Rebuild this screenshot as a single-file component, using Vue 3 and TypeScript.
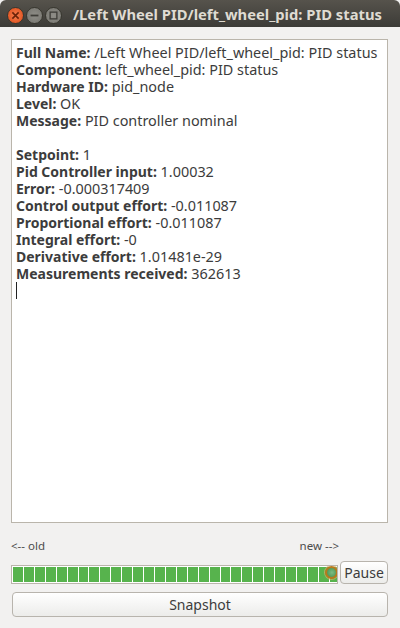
<script setup lang="ts">
interface Row { label: string; value: string }
const top: Row[] = [
  { label: 'Full Name:', value: '/Left Wheel PID/left_wheel_pid: PID status' },
  { label: 'Component:', value: 'left_wheel_pid: PID status' },
  { label: 'Hardware ID:', value: 'pid_node' },
  { label: 'Level:', value: 'OK' },
  { label: 'Message:', value: 'PID controller nominal' },
]
const bottom: Row[] = [
  { label: 'Setpoint:', value: '1' },
  { label: 'Pid Controller input:', value: '1.00032' },
  { label: 'Error:', value: '-0.000317409' },
  { label: 'Control output effort:', value: '-0.011087' },
  { label: 'Proportional effort:', value: '-0.011087' },
  { label: 'Integral effort:', value: '-0' },
  { label: 'Derivative effort:', value: '1.01481e-29' },
  { label: 'Measurements received:', value: '362613' },
]
const cells = Array.from({ length: 30 }, (_, i) => i)
</script>

<template>
  <div class="window">
    <header class="titlebar">
      <div class="controls">
        <span class="ctl close">
          <svg width="9" height="9" viewBox="0 0 8 8"><path d="M1.2 1.2L6.8 6.8M6.8 1.2L1.2 6.8" stroke="#6a2208" stroke-width="1.4" /></svg>
        </span>
        <span class="ctl">
          <svg width="9" height="9" viewBox="0 0 8 8"><path d="M0.5 4H7.5" stroke="#3f3e39" stroke-width="1.6" /></svg>
        </span>
        <span class="ctl">
          <svg width="9" height="9" viewBox="0 0 8 8"><rect x="1" y="1" width="6" height="6" fill="none" stroke="#3f3e39" stroke-width="1.2" /></svg>
        </span>
      </div>
      <div class="title">/Left Wheel PID/left_wheel_pid: PID status</div>
    </header>
    <main class="body">
      <section class="textbox">
        <div v-for="r in top" :key="r.label" class="line"><b>{{ r.label }}</b> {{ r.value }}</div>
        <div class="line blank"></div>
        <div v-for="r in bottom" :key="r.label" class="line"><b>{{ r.label }}</b> {{ r.value }}</div>
        <div class="caret"></div>
      </section>
      <div class="legend"><span>&lt;-- old</span><span>new --&gt;</span></div>
      <div class="timeline-row">
        <div class="timeline">
          <span v-for="c in cells" :key="c" class="cell"></span>
          <span class="marker"></span>
        </div>
        <button class="btn pause">Pause</button>
      </div>
      <button class="btn snapshot">Snapshot</button>
    </main>
  </div>
</template>

<style>
html, body { margin: 0; background: #f2f1f0; }
</style>

<style scoped>
.window {
  width: 400px;
  height: 628px;
  overflow: hidden;
  background: #f2f1f0;
  font-family: "Noto Sans", "Open Sans", sans-serif;
  font-size: 14px;
  color: #3c3c3c;
  display: flex;
  flex-direction: column;
}
.titlebar {
  height: 27px;
  flex: none;
  border-radius: 6px 6px 0 0;
  background: linear-gradient(#56534c, #3c3b37);
  display: flex;
  align-items: center;
  padding-left: 7px;
  box-sizing: border-box;
}
.controls { display: flex; gap: 2px; width: 66px; flex: none; margin-top: 4px; }
.ctl {
  width: 17px;
  height: 17px;
  flex: none;
  box-sizing: border-box;
  border-radius: 50%;
  background: radial-gradient(circle, #8f8e88, #75746e);
  border: 1px solid #38372f;
  display: flex;
  align-items: center;
  justify-content: center;
}
.close { background: radial-gradient(circle, #f58050, #dd4814); }
.title {
  color: #dfdbd2;
  font-weight: 700;
  font-size: 14.75px;
  white-space: nowrap;
}
.body {
  flex: 1;
  padding: 12px 12px 0 11px;
  display: flex;
  flex-direction: column;
}
.textbox {
  height: 484px;
  flex: none;
  box-sizing: border-box;
  background: #fff;
  border: 1px solid #bab5ab;
  padding: 4px 4px;
  color: #3c3c3c;
  font-size: 14.4px;
  line-height: 17px;
}
.line { white-space: nowrap; height: 17px; }
.line b { font-weight: 700; font-size: 14px; }
.caret { width: 1px; height: 17px; background: #222; }
.legend {
  display: flex;
  justify-content: space-between;
  padding-right: 49px;
  margin-top: 15px;
  height: 16px;
  font-size: 11.5px;
  line-height: 16px;
  color: #4c4c4c;
}
.timeline-row {
  display: flex;
  align-items: flex-start;
  gap: 2px;
  margin-top: 7px;
  height: 23px;
}
.timeline {
  position: relative;
  width: 327px;
  height: 19px;
  margin-top: 4px;
  box-sizing: border-box;
  border: 1px solid #bab5ab;
  background: #fff;
  padding: 1px;
  display: flex;
  gap: 1px;
  overflow: hidden;
}
.cell { width: 9.93px; flex: none; background: #57b34d; }
.marker {
  position: absolute;
  right: -1px;
  top: 0;
  width: 13px;
  height: 13px;
  box-sizing: border-box;
  border-radius: 50%;
  border: 2px solid #b8791c;
  background: radial-gradient(circle at 55% 50%, #7dbb82, #3f8f4a);
  box-shadow: 0 0 0 1px rgba(214, 176, 110, 0.7);
}
.btn {
  font: inherit;
  color: #3c3c3c;
  background: linear-gradient(#ffffff, #ececea);
  border: 1px solid #b8b4ad;
  border-radius: 4px;
  padding: 0;
}
.pause { width: 48px; height: 23px; line-height: 20px; }
.snapshot { width: 376px; height: 25px; margin: 8px 0 0 1px; }
</style>
